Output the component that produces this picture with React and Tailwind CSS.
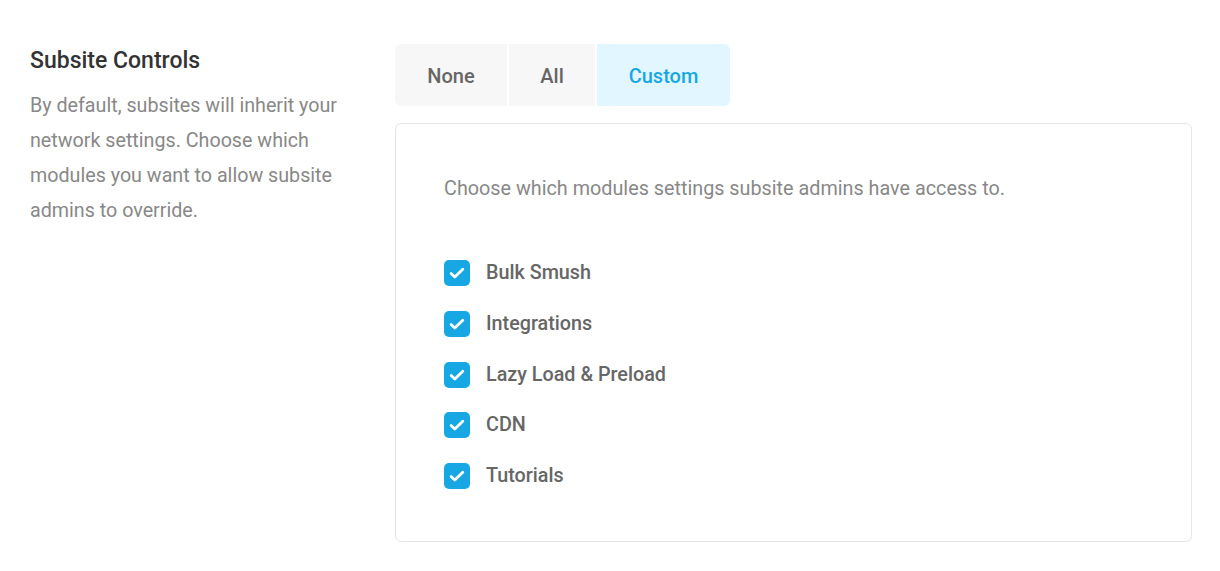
const modules = ['Bulk Smush', 'Integrations', 'Lazy Load & Preload', 'CDN', 'Tutorials'];

const CheckIcon = () => (
    <svg width="26" height="26" viewBox="0 0 26 26" fill="none">
        <path d="M7.2 13.4l3.6 3.5L18.8 9.2" stroke="white" strokeWidth="2.8" strokeLinecap="round" strokeLinejoin="round" />
    </svg>
);

export default function App() {
    return (
        <div className="w-[1220px] h-[571px] bg-white flex pl-[30px] pt-[44px]" style={{ fontFamily: 'Roboto, "Liberation Sans", sans-serif' }}>
            <div className="w-[365px] shrink-0">
                <h3 className="text-[23px] leading-[34px] font-medium text-[#333]">Subsite Controls</h3>
                <p className="text-[19.7px] leading-[35px] text-[#888] mt-[10px] pr-[15px]">
                    By default, subsites will inherit your network settings. Choose which modules you want to allow subsite admins to override.
                </p>
            </div>
            <div className="w-[797px] flex flex-col">
                <div className="flex h-[62px] w-fit rounded-[6px] overflow-hidden gap-[2px] text-[20px] font-medium">
                    <button className="w-[112px] pt-[1px] bg-[#f7f7f7] text-[#666]">None</button>
                    <button className="w-[86px] pt-[1px] bg-[#f7f7f7] text-[#666]">All</button>
                    <button className="w-[133px] pt-[1px] bg-[#e1f6ff] text-[#17a8e3]">Custom</button>
                </div>
                <div className="mt-[17px] h-[419px] border border-[#e6e6e6] rounded-[6px] pl-[48px] pt-[50px]">
                    <p className="text-[19.8px] leading-[30px] text-[#888]">Choose which modules settings subsite admins have access to.</p>
                    <div className="mt-[56px] flex flex-col gap-[24.75px]">
                        {modules.map((m) => (
                            <label key={m} className="flex items-center gap-[16px] h-[26px]">
                                <span className="w-[26px] h-[26px] rounded-[5px] bg-[#17a8e3] flex items-center justify-center">
                                    <CheckIcon />
                                </span>
                                <span className="text-[19.75px] font-medium text-[#666]">{m}</span>
                            </label>
                        ))}
                    </div>
                </div>
            </div>
        </div>
    );
}
